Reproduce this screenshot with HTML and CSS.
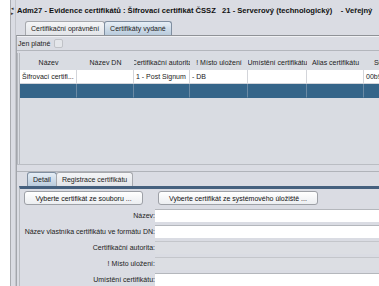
FILE: index.html
```html
<!DOCTYPE html>
<html lang="cs">
<head>
    <meta charset="UTF-8">
    <title>Adm27 - Evidence certifikátů</title>
    <link rel="stylesheet" href="styles.css">
</head>
<body>
    <div class="window">
        <div class="side"></div>
        <div class="splitter">
            <span class="arrow">&#9666;</span>
            <span class="arrow">&#9656;</span>
        </div>
        <div class="main">
            <div class="title">Adm27 - Evidence certifikátů : Šifrovací certifikát ČSSZ   21 - Serverový (technologický)    - Veřejný</div>

            <!-- Top tabs -->
            <div class="tabs top-tabs">
                <div class="tab">Certifikační oprávnění</div>
                <div class="tab active">Certifikáty vydané</div>
            </div>

            <div class="tab-panel">
                <div class="filter">
                    <span>Jen platné</span>
                    <span class="check"></span>
                </div>

                <div class="table-box">
                    <div class="grid head">
                        <div class="c">Název</div>
                        <div class="c">Název DN</div>
                        <div class="c">Certifikační autorita</div>
                        <div class="c">! Místo uložení</div>
                        <div class="c">Umístění certifikátu</div>
                        <div class="c">Alias certifikátu</div>
                        <div class="c">Sériové číslo</div>
                    </div>
                    <div class="grid row">
                        <div class="c">Šifrovací certifi...</div>
                        <div class="c"></div>
                        <div class="c">1 - Post Signum</div>
                        <div class="c">- DB</div>
                        <div class="c"></div>
                        <div class="c"></div>
                        <div class="c">00b9a1</div>
                    </div>
                    <div class="grid row selected">
                        <div class="c"></div>
                        <div class="c"></div>
                        <div class="c"></div>
                        <div class="c"></div>
                        <div class="c"></div>
                        <div class="c"></div>
                        <div class="c"></div>
                    </div>
                </div>

                <div class="divider"></div>

                <!-- Lower tabs -->
                <div class="tabs lower-tabs">
                    <div class="tab active">Detail</div>
                    <div class="tab">Registrace certifikátu</div>
                </div>

                <div class="detail">
                    <div class="buttons">
                        <button class="btn btn-file">Vyberte certifikát ze souboru ...</button>
                        <button class="btn btn-store">Vyberte certifikát ze systémového úložiště ...</button>
                    </div>
                    <div class="form">
                        <label>Název:</label>
                        <div class="field"></div>
                        <label>Název vlastníka certifikátu ve formátu DN:</label>
                        <div class="field"></div>
                        <label>Certifikační autorita:</label>
                        <div class="field disabled"></div>
                        <label>! Místo uložení:</label>
                        <div class="field disabled"></div>
                        <label>Umístění certifikátu:</label>
                        <div class="field"></div>
                    </div>
                </div>
            </div>
        </div>
    </div>
</body>
</html>
```

FILE: styles.css
```css
body {
    margin: 0;
    padding: 0;
    background: #dadce3;
    font-family: "Liberation Sans", Arial, sans-serif;
    font-size: 7px;
    color: #1a1a1a;
    overflow: hidden;
}

.window {
    display: flex;
    width: 379px;
    height: 286px;
    overflow: hidden;
}

/* Left collapsed pane + splitter */
.side {
    width: 10px;
    flex-shrink: 0;
    background: #fff;
    border-right: 1px solid #a9abb0;
}

.splitter {
    width: 4px;
    flex-shrink: 0;
    display: flex;
    flex-direction: column;
    padding-top: 6px;
    border-right: 1px solid #c3c5cb;
}

.arrow {
    font-size: 5px;
    line-height: 5px;
    color: #333;
}

.main {
    flex: 1;
    display: flex;
    flex-direction: column;
    min-width: 0;
}

.title {
    height: 21px;
    line-height: 22px;
    padding-left: 1px;
    font-size: 7.6px;
    font-weight: bold;
    white-space: pre;
    color: #111;
}

/* Tabs */
.tabs {
    display: flex;
    height: 14px;
}

.top-tabs {
    padding-left: 9px;
}

.tab {
    height: 13px;
    line-height: 13px;
    padding: 0 5px;
    background: linear-gradient(#f4f5f7, #e2e4e8);
    border: 1px solid #a7a9ae;
    border-bottom: none;
    border-radius: 3px 3px 0 0;
    color: #222;
    white-space: nowrap;
}

.tab + .tab {
    margin-left: -1px;
}

.tab.active {
    background: linear-gradient(#e6eef6, #b9cbdc);
    border-color: #7f8ea0;
}

.tab-panel {
    flex: 1;
    display: flex;
    flex-direction: column;
    border-top: 1px solid #8f9297;
    border-left: 1px solid #a3a6ac;
    box-shadow: inset 0 1px 0 #f0f1f4;
    min-height: 0;
}

.filter {
    height: 14px;
    display: flex;
    align-items: center;
    gap: 4px;
    padding-left: 1px;
    padding-top: 1px;
    border-bottom: 1px solid #b3b6bc;
}

.check {
    width: 7px;
    height: 7px;
    background: #e4e6ea;
    border: 1px solid #c0c2c7;
    border-radius: 2px;
}

/* Table */
.table-box {
    height: 118px;
    margin-top: 2px;
    border-left: 3px double #b5b8be;
    background: #d9dce2;
    overflow: hidden;
}

.grid {
    display: grid;
    grid-template-columns: 57px 57px 56px 58px 59px 57px 60px;
}

.head {
    height: 14px;
    line-height: 14px;
    margin-top: 3px;
    color: #222;
}

.head .c {
    display: flex;
    justify-content: center;
    padding: 0;
}

.row {
    height: 14px;
    line-height: 14px;
}

.row .c {
    background: #fff;
    border-right: 1px solid #d3d5da;
    border-bottom: 1px solid #d3d5da;
}

.row.selected .c {
    background: #356589;
    border-right-color: #6b8aa4;
    border-bottom-color: #356589;
}

.c {
    padding-left: 2px;
    white-space: nowrap;
    overflow: hidden;
}

.divider {
    height: 6px;
    border-top: 1px solid #babdc3;
    border-bottom: 1px solid #b0b3b9;
}

/* Lower tabs */
.lower-tabs {
    padding-left: 10px;
}

.lower-tabs .tab {
    padding: 0 5px;
}

.detail {
    flex: 1;
    margin-left: 2px;
    border-top: 3px solid #45607e;
    border-left: 1px solid #b9bcc1;
    padding-top: 2px;
}

.buttons {
    display: flex;
    gap: 15px;
    padding-left: 4px;
}

.btn {
    height: 14px;
    padding: 0 7px;
    font-family: "Liberation Sans", Arial, sans-serif;
    font-size: 7px;
    color: #111;
    background: linear-gradient(#ffffff, #eceef1);
    border: 1px solid #9da0a6;
    border-radius: 3px;
}

.btn-file {
    width: 119px;
}

.btn-store {
    width: 160px;
}

.form {
    display: grid;
    grid-template-columns: 135px 1fr;
    row-gap: 3px;
    margin-top: 4px;
}

.form label {
    text-align: right;
    height: 13px;
    line-height: 13px;
    white-space: nowrap;
    color: #222;
}

.field {
    height: 12px;
    background: #fff;
    border-top: 1px solid #b4b7bc;
}

.field.disabled {
    background: #dcdee3;
    border-top: 1px solid #c4c6cb;
}
```
